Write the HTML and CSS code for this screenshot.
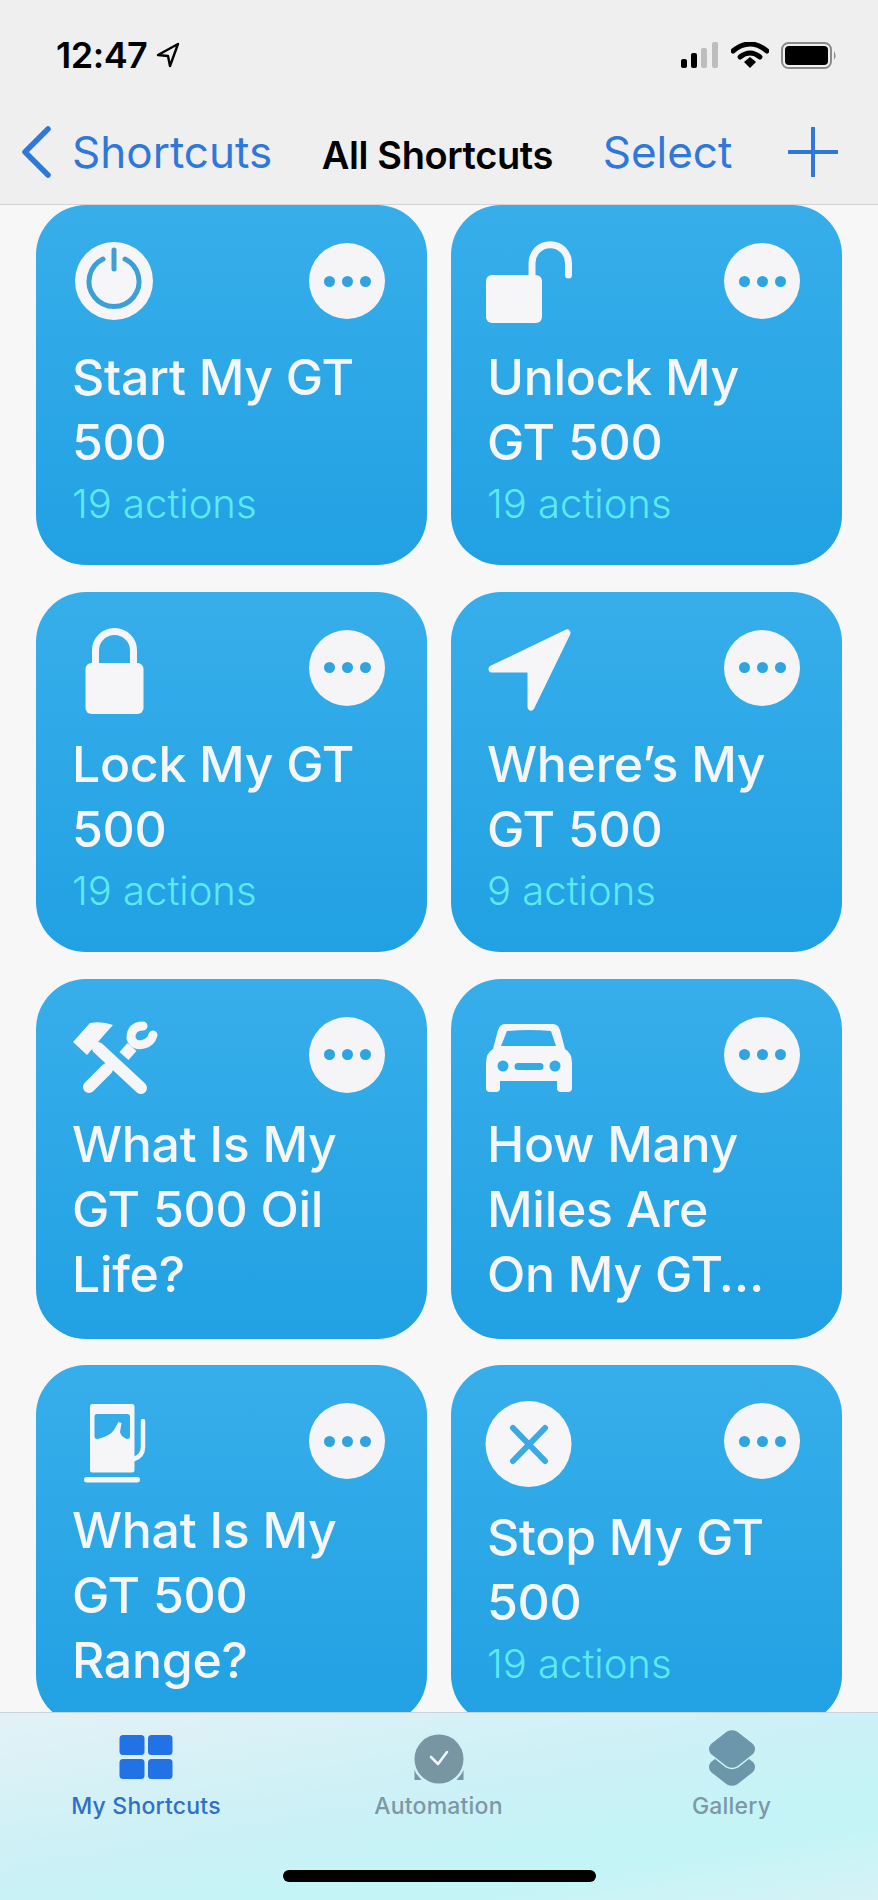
FILE: index.html
```html
<!DOCTYPE html>
<html lang="en">
<head>
  <meta charset="UTF-8" />
  <meta name="viewport" content="width=device-width, initial-scale=1.0"/>
  <title>All Shortcuts</title>
  <link rel="stylesheet" href="styles.css">
</head>
<body>

<div class="phone">
  <header class="top">
    <div class="status">
      <div class="clock">
        <span>12:47</span>
        <svg class="loc" viewBox="0 0 24 26"><path d="M2 13 L22 2 L14 24 L12 14 Z" fill="none" stroke="#000" stroke-width="2.4" stroke-linejoin="round"/></svg>
      </div>
      <div class="status-icons">
        <svg class="signal" viewBox="0 0 38 26">
          <rect x="0" y="17" width="6" height="9" rx="2" fill="#000"/>
          <rect x="10" y="11" width="6" height="15" rx="2" fill="#000"/>
          <rect x="20" y="6" width="6" height="20" rx="2" fill="#bdbdbd"/>
          <rect x="31" y="0" width="6" height="26" rx="2" fill="#bdbdbd"/>
        </svg>
        <svg class="wifi" viewBox="0 0 38 26">
          <path d="M2 9 Q19 -5 36 9" fill="none" stroke="#000" stroke-width="5" stroke-linecap="round"/>
          <path d="M9 15 Q19 7 29 15" fill="none" stroke="#000" stroke-width="5" stroke-linecap="round"/>
          <path d="M13 20 L19 15 L25 20 L19 26 Z" fill="#000"/>
        </svg>
        <svg class="battery" viewBox="0 0 56 27">
          <rect x="1" y="1" width="49" height="25" rx="6.5" fill="none" stroke="#8a8a8a" stroke-width="2"/>
          <rect x="4" y="4" width="43" height="19" rx="4" fill="#000"/>
          <path d="M53 9 Q56 13.5 53 18 Z" fill="#8a8a8a"/>
        </svg>
      </div>
    </div>
    <nav class="bar">
      <a class="back">
        <svg class="chevron" viewBox="0 0 30 52"><path d="M27 3 L4 26 L27 49" fill="none" stroke="#2f78db" stroke-width="5.5" stroke-linecap="round" stroke-linejoin="round"/></svg>
        <span>Shortcuts</span>
      </a>
      <h1>All Shortcuts</h1>
      <a class="action">Select</a>
      <svg class="plus" viewBox="0 0 50 50"><path d="M25 1 V49 M1 25 H49" fill="none" stroke="#2f78db" stroke-width="4" stroke-linecap="round"/></svg>
    </nav>
  </header>

  <main class="list">
    <div class="grid">

      <div class="card">
        <div class="card-top">
          <svg class="icon" viewBox="0 0 88 88">
            <circle cx="44" cy="44" r="39" fill="#f6f6f8"/>
            <path d="M33 22 A25 25 0 1 0 55 22" fill="none" stroke="#3aa0d5" stroke-width="5" stroke-linecap="round"/>
            <path d="M44 13 V32" fill="none" stroke="#3aa0d5" stroke-width="5" stroke-linecap="round"/>
          </svg>
          <div class="more"><i></i><i></i><i></i></div>
        </div>
        <div class="card-text">
          <div class="name">Start My GT 500</div>
          <div class="count">19 actions</div>
        </div>
      </div>

      <div class="card">
        <div class="card-top">
          <svg class="icon" viewBox="0 0 88 88">
            <rect x="1" y="38" width="56" height="48" rx="6" fill="#f6f6f8"/>
            <path d="M47 40 V26 a18.25 18.25 0 0 1 36.5 0 V38" fill="none" stroke="#f6f6f8" stroke-width="7" stroke-linecap="round"/>
          </svg>
          <div class="more"><i></i><i></i><i></i></div>
        </div>
        <div class="card-text">
          <div class="name">Unlock My GT 500</div>
          <div class="count">19 actions</div>
        </div>
      </div>

      <div class="card">
        <div class="card-top">
          <svg class="icon" viewBox="0 0 88 88">
            <rect x="15.5" y="39" width="58" height="51" rx="6" fill="#f6f6f8"/>
            <path d="M25.5 42 V26.5 a19 19 0 0 1 38 0 V42" fill="none" stroke="#f6f6f8" stroke-width="7"/>
          </svg>
          <div class="more"><i></i><i></i><i></i></div>
        </div>
        <div class="card-text">
          <div class="name">Lock My GT 500</div>
          <div class="count">19 actions</div>
        </div>
      </div>

      <div class="card">
        <div class="card-top">
          <svg class="icon" viewBox="0 0 88 88">
            <path d="M7 45 L82 9 L46 83 V45 Z" fill="#f6f6f8" stroke="#f6f6f8" stroke-width="7" stroke-linejoin="round"/>
          </svg>
          <div class="more"><i></i><i></i><i></i></div>
        </div>
        <div class="card-text">
          <div class="name">Where’s My GT 500</div>
          <div class="count">9 actions</div>
        </div>
      </div>

      <div class="card">
        <div class="card-top">
          <svg class="icon" viewBox="0 0 88 88">
            <path d="M3 31 L20 12 Q32 10 43 14 L34 24 L17 44 Z" fill="#f6f6f8"/>
            <path d="M28 37 L71 77" fill="none" stroke="#f6f6f8" stroke-width="12" stroke-linecap="round"/>
            <path d="M19 76 L37 58" fill="none" stroke="#f6f6f8" stroke-width="12" stroke-linecap="round"/>
            <path d="M54 45 L62 36" fill="none" stroke="#f6f6f8" stroke-width="12"/>
            <path d="M73 15 Q61 15 61 27 Q64 36 74 33 Q81 31 83 24" fill="none" stroke="#f6f6f8" stroke-width="9" stroke-linecap="round"/>
          </svg>
          <div class="more"><i></i><i></i><i></i></div>
        </div>
        <div class="card-text">
          <div class="name">What Is My GT 500 Oil Life?</div>
        </div>
      </div>

      <div class="card">
        <div class="card-top">
          <svg class="icon" viewBox="0 0 88 88">
            <path fill-rule="evenodd" fill="#f6f6f8" d="M20 13 H68 Q73 13 75 19 L80 38 Q87 42 87 52 V66 Q87 70 83 70 H5 Q1 70 1 66 V52 Q1 42 8 38 L13 19 Q15 13 20 13 Z M22 20 Q44 18 66 20 L71 35 H16 Z M12.5 55 a5.5 5.5 0 1 0 11 0 a5.5 5.5 0 1 0 -11 0 Z M64.5 55 a5.5 5.5 0 1 0 11 0 a5.5 5.5 0 1 0 -11 0 Z M33 52 H55 a3.5 3.5 0 0 1 0 7 H33 a3.5 3.5 0 0 1 0 -7 Z"/>
            <rect x="1" y="64" width="14" height="17" rx="4" fill="#f6f6f8"/>
            <rect x="72" y="64" width="15" height="17" rx="4" fill="#f6f6f8"/>
          </svg>
          <div class="more"><i></i><i></i><i></i></div>
        </div>
        <div class="card-text">
          <div class="name">How Many Miles Are On My GT…</div>
        </div>
      </div>

      <div class="card">
        <div class="card-top">
          <svg class="icon" viewBox="0 0 88 88">
            <path fill-rule="evenodd" fill="#f6f6f8" d="M22 7 H62 Q64.5 7 64.5 9.5 V73 Q64.5 75.5 62 75.5 H22 Q20 75.5 20 73 V9.5 Q20 7 22 7 Z M27 17 Q24.5 17 24.5 19.5 V39 Q24.5 42 27 42 H57 Q60 42 60 39 V19.5 Q60 17 57 17 Z"/>
            <path d="M28 42 Q40 39 44 33 L48.5 25 L51.5 26 L50 35 Q51 40 57 42 Z" fill="#f6f6f8"/>
            <path d="M64 62 Q73 59 73 50 V24" fill="none" stroke="#f6f6f8" stroke-width="4.5" stroke-linecap="round"/>
            <rect x="14" y="80" width="56" height="5.5" rx="2.7" fill="#f6f6f8"/>
          </svg>
          <div class="more"><i></i><i></i><i></i></div>
        </div>
        <div class="card-text">
          <div class="name">What Is My GT 500 Range?</div>
        </div>
      </div>

      <div class="card">
        <div class="card-top">
          <svg class="icon" viewBox="0 0 88 88">
            <circle cx="43.5" cy="47" r="43" fill="#f6f6f8"/>
            <path d="M28 31 L60 64 M60 31 L28 64" fill="none" stroke="#3aa9e4" stroke-width="6" stroke-linecap="round"/>
          </svg>
          <div class="more"><i></i><i></i><i></i></div>
        </div>
        <div class="card-text">
          <div class="name">Stop My GT 500</div>
          <div class="count">19 actions</div>
        </div>
      </div>

    </div>
  </main>

  <footer class="tabs">
    <div class="tab active">
      <svg class="tab-icon" viewBox="0 0 54 56">
        <rect x="0.5" y="5" width="25" height="20" rx="3.5" fill="#2272e6"/>
        <rect x="29" y="5" width="24.5" height="20" rx="3.5" fill="#2272e6"/>
        <rect x="0.5" y="29" width="25" height="20" rx="3.5" fill="#2272e6"/>
        <rect x="29" y="29" width="24.5" height="20" rx="3.5" fill="#2272e6"/>
      </svg>
      <span>My Shortcuts</span>
    </div>
    <div class="tab">
      <svg class="tab-icon" viewBox="0 0 50 56">
        <path d="M0.500 35 H49.5 V50 H44 Q42 50 40 45 H10 Q8 50 6 50 H0.500 Z" fill="#7795a3"/>
        <circle cx="25" cy="29" r="27" fill="#d0f2f6"/>
        <circle cx="25" cy="29" r="24.5" fill="#7795a3"/>
        <path d="M17 27 L24 34 L33 22" fill="none" stroke="#eef8fa" stroke-width="2.6" stroke-linecap="round" stroke-linejoin="round"/>
      </svg>
      <span>Automation</span>
    </div>
    <div class="tab">
      <svg class="tab-icon" viewBox="0 0 50 56">
        <path d="M20 20 Q25 17.500 30 20 L46 32 Q50 37 46 42 L30 54.500 Q25 57 20 54.500 L4 42 Q0 37 4 32 Z" fill="#6c96aa"/>
        <path d="M20 1.500 Q25 -1 30 1.500 L46 14 Q50 19 46 24 L30 36.500 Q25 39 20 36.500 L4 24 Q0 19 4 14 Z" fill="#6c96aa" stroke="#d0f2f6" stroke-width="3" paint-order="stroke"/>
      </svg>
      <span>Gallery</span>
    </div>
    <div class="home"></div>
  </footer>
</div>

</body>
</html>
```

FILE: styles.css
```css
* {
  box-sizing: border-box;
}

body {
  margin: 0;
  padding: 0;
  font-family: Inter, "Noto Sans", sans-serif;
  background: #f7f7f8;
}

.phone {
  width: 878px;
  height: 1900px;
  display: flex;
  flex-direction: column;
  overflow: hidden;
}

/* status bar + nav */
.top {
  height: 205px;
  flex: none;
  background: #efeff0;
  border-bottom: 1px solid #d4d4d6;
  position: relative;
  z-index: 1;
}

.status {
  height: 110px;
  display: flex;
  align-items: center;
  justify-content: space-between;
  padding: 0 41px 0 56px;
}

.clock {
  display: flex;
  align-items: center;
  gap: 9px;
  font-size: 36px;
  font-weight: 600;
  color: #000;
  letter-spacing: -0.5px;
}

.loc {
  width: 24px;
  height: 26px;
}

.status-icons {
  display: flex;
  align-items: center;
  gap: 12px;
}

.signal {
  width: 38px;
  height: 26px;
}

.wifi {
  width: 38px;
  height: 26px;
}

.battery {
  width: 56px;
  height: 27px;
}

.bar {
  height: 84px;
  display: flex;
  align-items: center;
  justify-content: space-between;
  padding: 0 40px 0 21px;
}

.back {
  display: flex;
  align-items: center;
  gap: 21px;
  color: #2f78db;
  font-size: 44px;
}

.chevron {
  width: 30px;
  height: 52px;
}

.bar h1 {
  margin: 6px 0 0;
  font-size: 38px;
  font-weight: 600;
  color: #000;
  letter-spacing: -0.4px;
}

.action {
  color: #2f78db;
  font-size: 44px;
  margin-right: 6px;
}

.plus {
  width: 50px;
  height: 50px;
}

/* cards */
.list {
  flex: 1;
  min-height: 0;
  overflow: hidden;
}

.grid {
  display: grid;
  grid-template-columns: 391px 391px;
  grid-auto-rows: 360px;
  column-gap: 24px;
  row-gap: 26.8px;
  padding: 0 36px;
}

.card {
  display: flex;
  flex-direction: column;
  justify-content: space-between;
  padding: 32px 42px 32px 36px;
  border-radius: 50px;
  background: linear-gradient(to bottom, #37aeea, #21a1e3);
  color: #f6f6f8;
}

.card-top {
  display: flex;
  align-items: center;
  justify-content: space-between;
  height: 88px;
}

.icon {
  width: 88px;
  height: 88px;
  margin-left: -2px;
  overflow: visible;
}

.more {
  width: 76px;
  height: 76px;
  border-radius: 50%;
  background: #f5f5f7;
  display: flex;
  align-items: center;
  justify-content: center;
  gap: 7px;
}

.more i {
  width: 11px;
  height: 11px;
  border-radius: 50%;
  background: #2fa4df;
}

.name {
  font-size: 50px;
  font-weight: 500;
  line-height: 65px;
  letter-spacing: -0.3px;
  margin-right: 28px;
}

.count {
  font-size: 40px;
  font-weight: 300;
  line-height: 58px;
  color: #5ceaf2;
}

/* tab bar */
.tabs {
  flex: none;
  height: 188px;
  position: relative;
  z-index: 1;
  display: grid;
  grid-template-columns: 292px 293px 293px;
  align-items: start;
  padding-top: 17px;
  border-top: 1px solid #c8d4d8;
  background: linear-gradient(170deg, #e3f1f7 0%, #ccf1f6 45%, #c3f5f6 75%, #d6f2f6 100%);
}

.tab {
  display: flex;
  flex-direction: column;
  align-items: center;
  gap: 6px;
  font-size: 23px;
  font-weight: 500;
  letter-spacing: 0.2px;
  color: #7d97a5;
}

.tab.active {
  color: #2f6fc4;
}

.tab-icon {
  width: 54px;
  height: 56px;
}

.home {
  position: absolute;
  left: 283px;
  bottom: 18px;
  width: 313px;
  height: 12px;
  border-radius: 6px;
  background: #000;
}
```
